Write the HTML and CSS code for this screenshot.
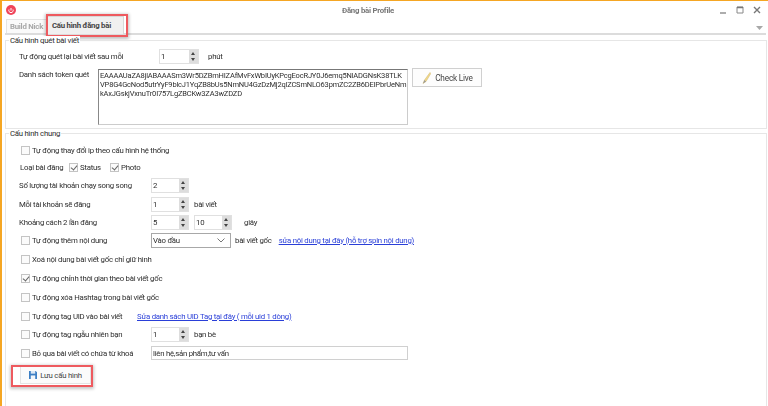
FILE: index.html
```html
<!DOCTYPE html>
<html lang="vi">
<head>
<meta charset="utf-8">
<title>Đăng bài Profile</title>
<link rel="stylesheet" href="styles.css">
</head>
<body>
<div class="window">
  <header class="titlebar">
    <svg class="app-icon" width="10" height="10" viewBox="0 0 10 10"><circle cx="5" cy="5" r="5" fill="#f0455a"/><path d="M3 4.500a2.200 2.200 0 1 0 4 0M5 3v2.500" fill="none" stroke="#fff" stroke-width="1"/></svg>
    <div class="title">Đăng bài Profile</div>
    <div class="controls">
      <svg width="8" height="8" viewBox="0 0 8 8"><path d="M1 7h6" stroke="#777" stroke-width="1.200"/></svg>
      <svg width="8" height="8" viewBox="0 0 8 8"><path d="M1 1h6v6H1z" fill="none" stroke="#888"/><path d="M1 1.500h6" stroke="#777" stroke-width="1.500"/></svg>
      <svg width="8" height="8" viewBox="0 0 8 8"><path d="M1 1l6 6M7 1L1 7" stroke="#777" stroke-width="1.400"/></svg>
    </div>
  </header>
  <nav class="tabs">
    <div class="tab">Build Nick</div>
    <div class="tab active">Cấu hình đăng bài</div>
    <svg class="tab-menu" width="7" height="4" viewBox="0 0 7 4"><path d="M0 0h7L3.500 4z" fill="#a8a8a8"/></svg>
  </nav>
  <main class="panel">
    <section class="group group-scan">
      <div class="legend">Cấu hình quét bài viết</div>
      <div class="row r20 lbl-row">
        <label class="lbl-scan">Tự động quét lại bài viết sau mỗi</label>
        <div class="spin w40"><span>1</span><i class="arrows"></i></div>
        <span class="unit-scan">phút</span>
      </div>
      <div class="token-row">
        <label class="lbl-token">Danh sách token quét</label>
        <div class="token">EAAAAUaZA8jlABAAASm3Wr5DZBmHIZAfMvFxWbIUyKPcgEocRJY0J6emq5NlADGNsK38TLK<br>VP8G4GcNod5utrYyF9blcJ1YqZB8bUs5NmNU4GzDzMj2qlZCSmNLO63pmZC2ZB6DElPbrUeNm<br>kAxJGskjVxnuTr0I757LgZBCKw3ZA3wZDZD</div>
        <button class="check-live">
          <svg width="9" height="12" viewBox="0 0 9 12"><path d="M8 .5L2.500 8 1 11.500 4 9.500 8.800 1.500z" fill="#f3d98a" stroke="#cdb76f" stroke-width=".5"/><path d="M1 11.500l1.500-3.500 1.500 1.500z" fill="#999"/></svg>
          <span>Check Live</span>
        </button>
      </div>
    </section>
    <section class="group group-common">
      <div class="legend">Cấu hình chung</div>
      <div class="row r17 ind"><i class="cb"></i><span>Tự động thay đổi ip theo cấu hình hệ thống</span></div>
      <div class="row r17 type-row"><span class="lbl-type">Loại bài đăng</span><i class="cb on"></i><span class="opt">Status</span><i class="cb on"></i><span>Photo</span></div>
      <div class="row r19 lbl-row"><span class="lbl">Số lượng tài khoản chạy song song</span><div class="spin"><span>2</span><i class="arrows"></i></div></div>
      <div class="row r19 lbl-row"><span class="lbl">Mỗi tài khoản sẽ đăng</span><div class="spin"><span>1</span><i class="arrows"></i></div><span class="after">bài viết</span></div>
      <div class="row r17 lbl-row"><span class="lbl">Khoảng cách 2 lần đăng</span><div class="spin"><span>5</span><i class="arrows"></i></div><div class="spin second"><span>10</span><i class="arrows"></i></div><span class="after-sec">giây</span></div>
      <div class="row r19 ind"><i class="cb"></i><span class="lbl-cb">Tự động thêm nội dung</span>
        <div class="select"><span>Vào đầu</span><svg width="8" height="5" viewBox="0 0 8 5"><path d="M.5.500L4 4 7.500.500" fill="none" stroke="#777"/></svg></div>
        <span class="after-sel">bài viết gốc</span><a class="link link-spin" href="#">sửa nội dung tại đây (hỗ trợ spin nội dung)</a></div>
      <div class="row r19 ind"><i class="cb"></i><span>Xoá nội dung bài viết gốc chỉ giữ hình</span></div>
      <div class="row r19 ind"><i class="cb on"></i><span>Tự động chỉnh thời gian theo bài viết gốc</span></div>
      <div class="row r19 ind"><i class="cb"></i><span>Tự động xóa Hashtag trong bài viết gốc</span></div>
      <div class="row r18 ind"><i class="cb"></i><span class="lbl-uid">Tự động tag UID vào bài viết</span><a class="link" href="#">Sửa danh sách UID Tag tại đây ( mỗi uid 1 dòng)</a></div>
      <div class="row r19 ind"><i class="cb"></i><span class="lbl-cb">Tự động tag ngẫu nhiên bạn</span><div class="spin"><span>1</span><i class="arrows"></i></div><span class="after">bạn bè</span></div>
      <div class="row r18 ind"><i class="cb"></i><span class="lbl-cb">Bỏ qua bài viết có chứa từ khoá</span><div class="keywords">liên hệ,sản phẩm,tư vấn</div></div>
      <button class="save">
        <svg width="8" height="8" viewBox="0 0 9 9"><path d="M0 0h7.500L9 1.500V9H0z" fill="#3d7fc4"/><path d="M2 0h5v3H2z" fill="#dbe8f5"/><path d="M2 5h5v4H2z" fill="#f2f6fa"/></svg>
        <span>Lưu cấu hình</span>
      </button>
    </section>
  </main>
</div>
</body>
</html>
```
FILE: styles.css
```css
* { box-sizing: border-box; }
html, body { margin: 0; height: 406px; overflow: hidden; background: #fff; }
body { font-family: Roboto, "Liberation Sans", sans-serif; font-size: 7.8px; letter-spacing: -.25px; color: #2e2e2e; }
.window { height: 406px; border-top: 1px solid #f5a623; border-left: 2px solid #f5a623; filter: blur(0.4px); }

.titlebar { height: 15px; display: flex; align-items: center; position: relative; padding: 3px 7px 0 4px; }
.title { position: absolute; left: 0; right: 34px; top: 5px; text-align: center; font-weight: 700; color: #777; }
.controls { margin-left: auto; display: flex; gap: 9px; position: relative; }
.controls svg { display: block; }

.tabs { height: 19px; margin-right: 2px; margin-left: 3px; border-bottom: 2px solid #dcdcdc; display: flex; align-items: flex-end; position: relative; padding-left: 1px; }
.tab { height: 14px; width: 41px; display: flex; align-items: center; justify-content: center; white-space: nowrap; color: #a8a8a8; font-weight: 700; background: #fafafa; border: 1px solid #e4e4e4; border-bottom: 0; }
.tab.active { position: relative; width: 77px; height: 18px; justify-content: flex-start; padding-left: 4px; color: #444; background: #f0f0f0; border-color: #d8d8d8; margin-bottom: -1px; }
.tab.active::after { content: ""; position: absolute; left: -2px; right: -5px; top: -3px; bottom: -3px; border: 2px solid #ee5a5f; box-shadow: 0 1px 3px 1px rgba(0,0,0,.25); }
.tab-menu { position: absolute; right: 3px; top: 10px; }

.panel { padding: 5px 0 0 3px; margin-right: 1px; }
.group { position: relative; margin: 0; border: 1px solid #e6e6e6; }
.legend { position: absolute; left: 3px; top: -5px; padding: 0 1px; line-height: 9px; background: #fff; white-space: nowrap; }
.group-scan { height: 89px; padding-top: 5px; }
.group-common { height: 280px; margin-top: 4px; padding-top: 8px; }

.row { display: flex; align-items: center; white-space: nowrap; }
.r17 { height: 17px; } .r18 { height: 18px; } .r19 { height: 19px; } .r20 { height: 20px; }
.lbl-row { padding-left: 13px; }
.ind { padding-left: 15px; }
.type-row { padding-left: 14px; }

.lbl-scan { width: 140px; }
.unit-scan { margin-left: 9px; }
.token-row { display: flex; align-items: flex-start; padding-left: 13px; margin-top: 3px; }
.lbl-token { width: 79px; padding-top: 1px; white-space: nowrap; }
.token { width: 310px; height: 56px; border: 1px solid #ccc; border-top: 1px solid #777; border-left: 1px solid #888; padding: 1px 1px 0 1px; line-height: 9px; font-size: 7.5px; letter-spacing: -.18px; white-space: nowrap; overflow: hidden; }
.check-live { width: 70px; height: 19px; margin: -1px 0 0 4px; padding: 0 0 0 1px; background: #fdfdfd; border: 1px solid #d0d0d0; display: flex; align-items: center; justify-content: center; gap: 4px; font: inherit; font-size: 8.25px; letter-spacing: -.2px; color: #444; }

.cb { width: 9px; height: 9px; border: 1px solid #c4c4c4; background: #fbfbfb; flex: none; margin-right: 2px; display: block; position: relative; }
.cb.on::after { content: ""; position: absolute; left: 2px; top: 0; width: 3px; height: 5px; border: solid #666; border-width: 0 1px 1px 0; transform: rotate(40deg); }
.lbl { width: 132px; }
.lbl-cb { width: 119px; }
.lbl-uid { width: 105px; }
.lbl-type { width: 49px; }
.type-row .opt { width: 30px; }
.spin { width: 38px; height: 15px; background: #fff; border: 1px solid #e0e0e0; display: flex; align-items: center; padding-left: 1px; flex: none; }
.w40 { width: 40px; }
.spin span { flex: 1; }
.second { margin-left: 5px; }
.arrows { width: 9px; height: 13px; background: #ddd; position: relative; display: block; }
.arrows::before, .arrows::after { content: ""; position: absolute; left: 2px; width: 0; height: 0; border-left: 2.500px solid transparent; border-right: 2.500px solid transparent; }
.arrows::before { top: 2px; border-bottom: 3px solid #444; }
.arrows::after { bottom: 2px; border-top: 3px solid #444; }
.after { margin-left: 5px; }
.after-sel { margin-left: 4px; }
.after-sec { margin-left: 12px; }
.select { width: 80px; height: 15px; border: 1px solid #a8a8a8; background: #fff; display: flex; align-items: center; justify-content: space-between; padding: 0 5px 1px 1px; }
.link { color: #2a3fd8; text-decoration: underline; }
.link-spin { margin-left: 7px; }
.keywords { width: 257px; height: 14px; border: 1px solid #d0d0d0; display: flex; align-items: center; padding-left: 1px; }
.save { position: relative; width: 71px; height: 18px; margin: 4px 0 0 14px; padding: 0; background: #fbfbfb; border: 1px solid #e4e4e4; display: flex; align-items: center; justify-content: center; gap: 3px; font: inherit; letter-spacing: -.25px; color: #444; }
.save::after { content: ""; position: absolute; left: -10px; right: -3px; top: -2px; bottom: -4px; border: 2px solid #ee5a5f; box-shadow: 0 1px 3px 1px rgba(0,0,0,.22); }
```
